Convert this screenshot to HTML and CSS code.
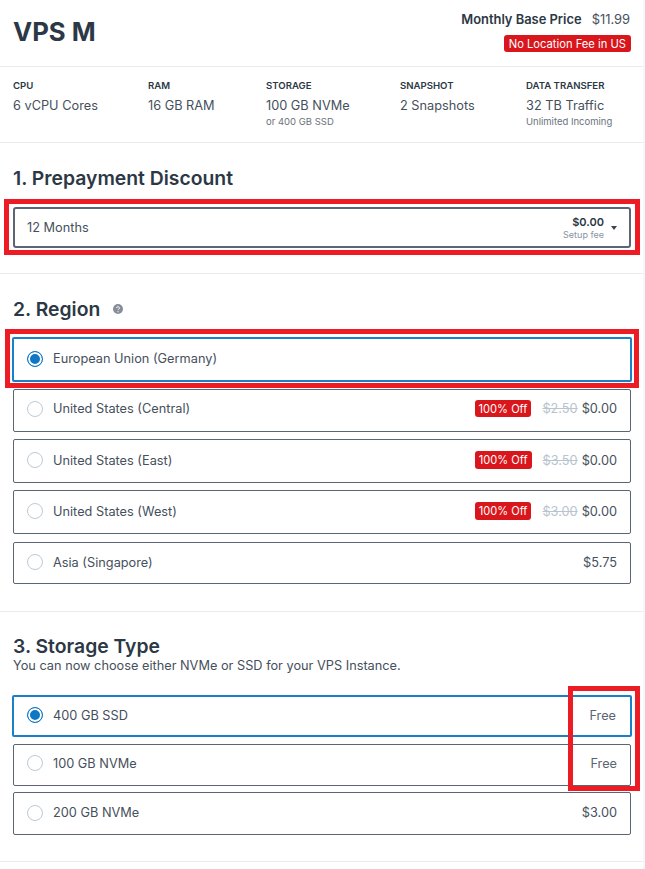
FILE: index.html
```html
<!DOCTYPE html>
<html lang="en">
<head>
<meta charset="utf-8">
<title>VPS M</title>
<link rel="stylesheet" href="styles.css">
</head>
<body>
<main class="page">
  <header class="head">
    <h1 class="title">VPS M</h1>
    <div class="price-box">
      <div class="price-line"><strong>Monthly Base Price</strong><span>$11.99</span></div>
      <span class="badge badge-large">No Location Fee in US</span>
    </div>
  </header>
  <section class="specs">
    <div class="spec"><h4>CPU</h4><p>6 vCPU Cores</p></div>
    <div class="spec"><h4>RAM</h4><p>16 GB RAM</p></div>
    <div class="spec"><h4>STORAGE</h4><p>100 GB NVMe</p><small>or 400 GB SSD</small></div>
    <div class="spec"><h4>SNAPSHOT</h4><p>2 Snapshots</p></div>
    <div class="spec"><h4>DATA TRANSFER</h4><p>32 TB Traffic</p><small>Unlimited Incoming</small></div>
  </section>
  <section class="block block-prepay">
    <h2>1. Prepayment Discount</h2>
    <div class="select">
      <span>12 Months</span>
      <div class="select-end">
        <div class="fee"><b>$0.00</b><small>Setup fee</small></div>
        <svg class="caret" width="6" height="4" viewBox="0 0 6 4"><path d="M0 0h6L3 4z"/></svg>
      </div>
    </div>
  </section>
  <section class="block block-region">
    <h2>2. Region <svg class="help" width="10" height="10" viewBox="0 0 10 10"><circle cx="5" cy="5" r="5"/><path d="M3.6 4a1.4 1.3 0 1 1 2.1 1.1c-.5.3-.7.5-.7 1" fill="none" stroke="#fff" stroke-width="1"/><circle cx="5" cy="7.7" r=".6" fill="#fff"/></svg></h2>
    <div class="options">
      <div class="option selected"><i class="radio"></i><span class="name">European Union (Germany)</span></div>
      <div class="option"><i class="radio"></i><span class="name">United States (Central)</span><span class="badge">100% Off</span><s>$2.50</s><span class="cost">$0.00</span></div>
      <div class="option"><i class="radio"></i><span class="name">United States (East)</span><span class="badge">100% Off</span><s>$3.50</s><span class="cost">$0.00</span></div>
      <div class="option"><i class="radio"></i><span class="name">United States (West)</span><span class="badge">100% Off</span><s>$3.00</s><span class="cost">$0.00</span></div>
      <div class="option"><i class="radio"></i><span class="name">Asia (Singapore)</span><span class="cost">$5.75</span></div>
    </div>
  </section>
  <section class="block block-storage">
    <h2>3. Storage Type</h2>
    <p class="sub">You can now choose either NVMe or SSD for your VPS Instance.</p>
    <div class="options">
      <div class="option selected"><i class="radio"></i><span class="name">400 GB SSD</span><span class="cost free">Free</span></div>
      <div class="option"><i class="radio"></i><span class="name">100 GB NVMe</span><span class="cost free">Free</span></div>
      <div class="option"><i class="radio"></i><span class="name">200 GB NVMe</span><span class="cost">$3.00</span></div>
    </div>
  </section>
  <div class="mark mark-select"></div>
  <div class="mark mark-region"></div>
  <div class="mark mark-free"></div>
</main>
</body>
</html>
```

FILE: styles.css
```css
* { box-sizing: border-box; }
html, body { margin: 0; padding: 0; }
body { background: #f6f7f9; color: #46505c; font-family: Inter, "Noto Sans", sans-serif; font-size: 13px; overflow: hidden; height: 869px; }
.page { position: relative; width: 643px; height: 869px; background: #fff; }
h1, h2, h4, p { margin: 0; }

.head { display: flex; justify-content: space-between; height: 67px; padding: 11px 12px 0 13px; border-bottom: 1px solid #e6ebf0; }
.title { font-size: 25.7px; font-weight: 700; color: #2c3845; line-height: 42px; }
.price-box { display: flex; flex-direction: column; align-items: flex-end; gap: 7px; padding-top: 1px; }
.price-line { display: flex; gap: 10px; padding-right: 1px; font-size: 12.9px; line-height: 16px; }
.price-line strong { font-weight: 600; color: #2c3845; }
.badge { display: inline-flex; align-items: center; justify-content: center; background: #d9161c; color: #fff; font-size: 11.1px; border-radius: 3px; height: 17.5px; padding: 0 4px; margin-right: 11px; }
.badge-large { font-size: 11.2px; margin: 0; padding: 0 5px; height: 17px; }

.specs { height: 76px; padding: 13px 13px 0; border-bottom: 1px solid #e6ebf0; display: grid; grid-template-columns: 135px 118px 134px 126px 1fr; }
.spec h4 { font-size: 9.6px; font-weight: 600; color: #2c3845; line-height: 12px; }
.spec p { font-size: 12.75px; line-height: 16px; margin-top: 6px; }
.spec small { display: block; font-size: 9.5px; line-height: 12px; margin-top: 2px; color: #6a727c; }

.block { padding: 0 12px 0 13px; border-bottom: 1px solid #e9ecef; }
.block h2 { font-size: 19.35px; font-weight: 600; color: #2c3845; line-height: 24px; display: flex; align-items: center; }
.block-prepay { height: 131px; padding-top: 23px; }
.block-prepay h2 { margin-bottom: 17px; }
.select { height: 41px; border: 2px solid #5b6574; border-radius: 3px; display: flex; justify-content: space-between; align-items: center; padding: 0 12px; font-size: 12.75px; }
.select-end { display: flex; align-items: center; gap: 7px; }
.fee { display: flex; flex-direction: column; align-items: flex-end; }
.fee b { font-size: 11px; font-weight: 600; line-height: 13px; color: #2c3845; }
.fee small { font-size: 9px; line-height: 11px; color: #8a94a0; }
.caret { fill: #3a4350; }

.block-region { height: 338px; padding-top: 23px; }
.block-region h2 { margin-bottom: 16px; }
.help { margin-left: 13px; fill: #878d99; }
.options { display: flex; flex-direction: column; gap: 7px; }
.option { height: 43px; padding: 0 13px 2px; border: 1px solid #5b6574; border-radius: 2px; display: flex; align-items: center; font-size: 12.75px; }
.option.selected { height: 45px; margin: 0 -1px; padding-left: 13px; padding-right: 14px; border: 2px solid #1a80c8; }
.block-region .option:nth-child(2) { padding-bottom: 4px; }
.block-region .option:nth-child(3), .block-region .option:nth-child(4) { height: 44px; }
.block-region .option:nth-child(5) { height: 42px; margin-top: 1px; }
.block-storage .option { height: 42px; }
.block-storage .option:nth-child(2) { padding-bottom: 4px; }
.block-storage .option:last-child { height: 43px; margin-top: -1px; }
.block-storage .option.selected { height: 42px; }
.radio { width: 16px; height: 16px; border: 1px solid #bccad6; border-radius: 50%; margin-right: 10px; flex: none; }
.selected .radio { border-color: #0f77c4; background: #0f77c4; box-shadow: inset 0 0 0 2px #fff; }
.name { flex: 1; }
.option s { color: #b8c4ce; margin-right: 4px; }
.free { color: #5b6574; }

.block-storage { height: 250px; padding-top: 23px; }
.block-storage h2 { line-height: 23px; }
.sub { font-size: 12.75px; line-height: 15px; margin-bottom: 22px; }

.mark { position: absolute; border: 5px solid #ed1c24; }
.mark-select { left: 4px; top: 199px; width: 636px; height: 56px; }
.mark-region { left: 5px; top: 329px; width: 634px; height: 59px; }
.mark-free { left: 568px; top: 686px; width: 72px; height: 105px; }
```
